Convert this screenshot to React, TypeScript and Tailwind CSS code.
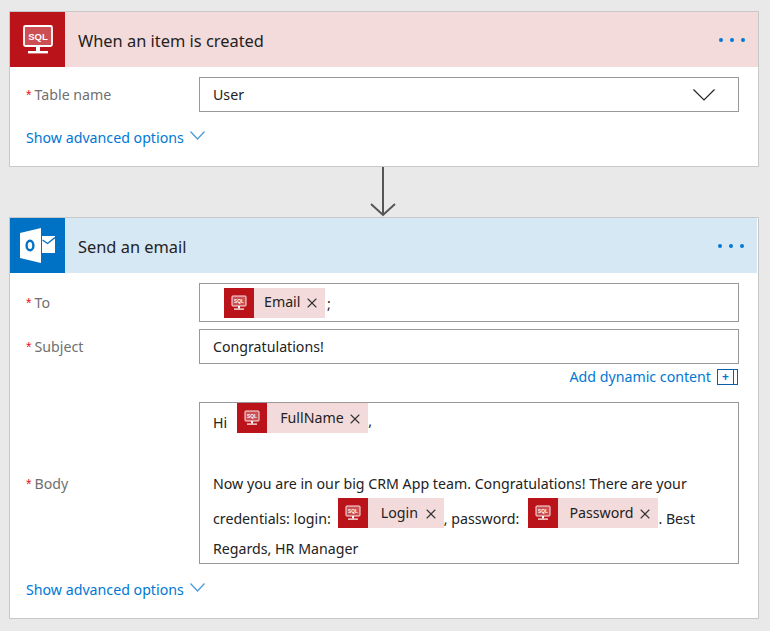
import { X } from "lucide-react";

const font = "font-['Noto_Sans','Open_Sans',sans-serif]";

function SqlIcon({ size }: { size: number }) {
  return (
    <svg width={size} height={size} viewBox="0 0 32 32" fill="none" aria-hidden>
      <rect x="2" y="2" width="28" height="20" rx="1.5" fill="#fff" fillOpacity="0.25" stroke="#fff" strokeWidth="1.8" />
      <text x="16" y="16" textAnchor="middle" fontSize="9.5" fontWeight="700" fill="#fff" fontFamily="Liberation Sans, sans-serif">
        SQL
      </text>
      <path d="M14 22h4v5h-4z" fill="#fff" />
      <rect x="6" y="27" width="20" height="2.4" fill="#fff" />
    </svg>
  );
}

function OutlookIcon() {
  return (
    <svg width="35" height="35" viewBox="0 0 35 35" aria-hidden>
      <path d="M0 5 21 0v35L0 30z" fill="#fff" />
      <rect x="22" y="8" width="13" height="17" fill="#fff" />
      <path d="M22.5 12l5 3.5 7.5-6" fill="none" stroke="#0072c6" strokeWidth="1.4" />
      <ellipse cx="10" cy="17.5" rx="3.4" ry="4.8" fill="none" stroke="#0072c6" strokeWidth="2.4" />
    </svg>
  );
}

function Chevron({ className, width, height }: { className: string; width: number; height: number }) {
  return (
    <svg className={className} width={width} height={height} viewBox={`0 0 ${width} ${height}`} fill="none" aria-hidden>
      <path d={`M0.5 0.5L${width / 2} ${height - 1}L${width - 0.5} 0.5`} stroke="currentColor" strokeWidth="1.2" />
    </svg>
  );
}

function Chip({ label, labelWidth }: { label: string; labelWidth: string }) {
  return (
    <span className="inline-flex h-[30px] items-stretch align-top">
      <span className="flex w-[30px] items-center justify-center bg-[#ba141a]">
        <SqlIcon size={16} />
      </span>
      <span className={`flex items-center justify-between bg-[#f4dbdb] pr-[5px] text-[#222] ${labelWidth}`}>
        <span className="-mt-[1px]">{label}</span>
        <X className="mt-[1px] h-[16px] w-[16px] text-[#333]" strokeWidth={1.6} />
      </span>
    </span>
  );
}

function Dots() {
  return (
    <div className="ml-auto mr-[13px] flex gap-[7px]">
      <span className="h-[4px] w-[4px] rounded-full bg-[#0078d4]" />
      <span className="h-[4px] w-[4px] rounded-full bg-[#0078d4]" />
      <span className="h-[4px] w-[4px] rounded-full bg-[#0078d4]" />
    </div>
  );
}

function Label({ text }: { text: string }) {
  return (
    <div className="w-[173px] shrink-0 pt-[2px] text-[14.2px] text-[#707070]">
      <span className="mr-[3px] font-['Liberation_Sans',sans-serif] text-[#e81123]">*</span>
      {text}
    </div>
  );
}

function AdvancedLink() {
  return (
    <div className="flex items-center gap-[6px] text-[14.2px] text-[#0078d4]">
      Show advanced options
      <Chevron className="-mt-[4px] text-[#4a9ad8]" width={15} height={9} />
    </div>
  );
}

export default function App() {
  return (
    <div className={`h-[631px] w-[770px] overflow-hidden bg-[#e9e9e9] pl-[9px] pt-[11px] ${font}`}>
      {/* Trigger */}
      <div className="h-[156px] w-[750px] border border-[#c8c8c8] bg-white">
        <div className="flex h-[55px] items-center bg-[#f4dbdb]">
          <div className="flex h-[55px] w-[55px] items-center justify-center bg-[#ba141a]">
            <SqlIcon size={32} />
          </div>
          <div className="ml-[13px] pt-[3px] text-[16.4px] text-[#222]">When an item is created</div>
          <Dots />
        </div>
        <div className="mt-[10px] flex items-center pl-[16px]">
          <Label text="Table name" />
          <div className="flex h-[35px] w-[540px] items-center justify-between border border-[#999] pl-[13px] pr-[23px] text-[14.2px] text-[#222]">
            User
            <Chevron className="text-[#222]" width={22} height={12} />
          </div>
        </div>
        <div className="mt-[15px] pl-[16px]">
          <AdvancedLink />
        </div>
      </div>

      {/* Connector */}
      <div className="flex h-[50px] w-[750px] justify-center pr-[2px]">
        <svg width="28" height="50" viewBox="0 0 28 50" fill="none" aria-hidden>
          <path d="M14 0v48M2 37l12 11 12-11" stroke="#555" strokeWidth="2" />
        </svg>
      </div>

      {/* Action */}
      <div className="h-[402px] w-[750px] border border-[#c8c8c8] bg-white">
        <div className="mr-px flex h-[55px] items-center bg-[#d7e8f5]">
          <div className="flex h-[55px] w-[55px] items-center justify-center bg-[#0072c6]">
            <OutlookIcon />
          </div>
          <div className="ml-[13px] pt-[3px] text-[16.4px] text-[#222]">Send an email</div>
          <Dots />
        </div>

        <div className="mt-[10px] flex items-center pl-[16px]">
          <Label text="To" />
          <div className="flex h-[39px] w-[540px] items-center border border-[#999] pl-[24px] text-[14.2px] text-[#222]">
            <Chip label="Email" labelWidth="w-[71px] pl-[10px]" />
            <span className="ml-[2px] mt-[3px]">;</span>
          </div>
        </div>

        <div className="mt-[7px] flex items-center pl-[16px]">
          <Label text="Subject" />
          <div className="flex h-[35px] w-[540px] items-center border border-[#999] pl-[13px] text-[14.2px] text-[#222]">
            Congratulations!
          </div>
        </div>

        <div className="flex h-[26px] items-center justify-end gap-[6px] pr-[20px] text-[14.2px] text-[#0078d4]">
          Add dynamic content
          <span className="flex h-[16px] w-[21px] items-center border border-[#0b5ea8] text-[12px] leading-none">
            <span className="flex h-full flex-1 items-center justify-center border-r border-[#0b5ea8] font-bold">+</span>
            <span className="w-[3px]" />
          </span>
        </div>

        <div className="mt-[12px] flex items-center pl-[16px]">
          <Label text="Body" />
          <div className="h-[162px] w-[540px] border border-[#999] pl-[13px] text-[14.2px] text-[#222]">
            <div className="flex h-[30px] items-center">
              <span className="mt-[10px]">Hi</span>
              <span className="ml-[10px]">
                <Chip label="FullName" labelWidth="w-[101px] pl-[13px]" />
              </span>
              <span className="mt-[6px]">,</span>
            </div>
            <div className="mt-[41px] h-[20px] leading-[20px]">
              Now you are in our big CRM App team. Congratulations! There are your
            </div>
            <div className="mt-[4px] flex h-[30px] items-center">
              <span className="mt-[12px]">credentials: login:</span>
              <span className="ml-[7px]">
                <Chip label="Login" labelWidth="w-[76px] pl-[13px]" />
              </span>
              <span className="mt-[12px]">, password:</span>
              <span className="ml-[9px]">
                <Chip label="Password" labelWidth="w-[100px] pl-[11px]" />
              </span>
              <span className="mt-[12px]">. Best</span>
            </div>
            <div className="mt-[11px] h-[20px] leading-[20px]">Regards, HR Manager</div>
          </div>
        </div>

        <div className="mt-[15px] pl-[16px]">
          <AdvancedLink />
        </div>
      </div>
    </div>
  );
}
